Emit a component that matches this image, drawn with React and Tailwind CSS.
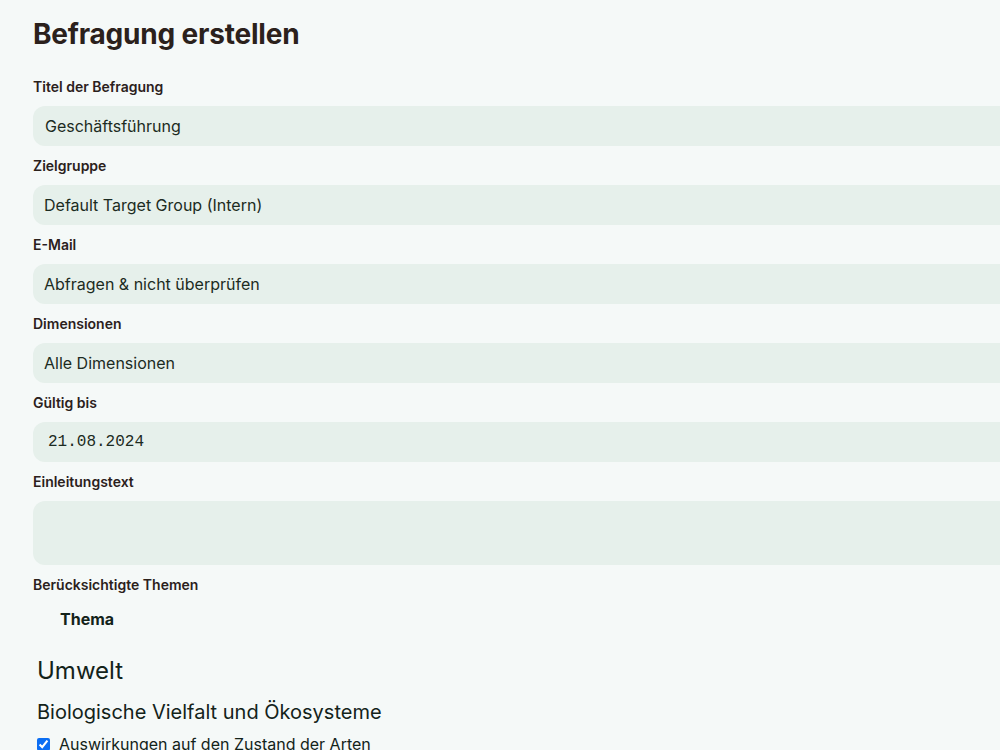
const fields = [
    { label: "Titel der Befragung", value: "Geschäftsführung", pad: "pl-3" },
    { label: "Zielgruppe", value: "Default Target Group (Intern)", pad: "pl-[11px]" },
    { label: "E-Mail", value: "Abfragen & nicht überprüfen", pad: "pl-[11px]" },
    { label: "Dimensionen", value: "Alle Dimensionen", pad: "pl-[11px]" },
];

function Label({ children }) {
    return <div className="text-sm leading-5 font-semibold text-[#2b211c] mb-[9px]">{children}</div>;
}

export default function App() {
    return (
        <div
            className="min-h-screen bg-[#f5f9f8] pl-[33px] pt-4 overflow-hidden"
            style={{ fontFamily: "Inter, 'Noto Sans', sans-serif" }}
        >
            <h1 className="text-[28px] leading-9 font-bold text-[#2b211c] tracking-[-0.2px]">Befragung erstellen</h1>

            <div className="mt-[25px] flex flex-col gap-[10px] mr-[-24px]">
                {fields.map((f) => (
                    <div key={f.label}>
                        <Label>{f.label}</Label>
                        <div className={`h-10 rounded-xl bg-[#e6f0eb] flex items-center text-base text-[#1c2b22] ${f.pad}`}>
                            {f.value}
                        </div>
                    </div>
                ))}
                <div>
                    <Label>Gültig bis</Label>
                    <div
                        className="h-10 rounded-xl bg-[#e6f0eb] flex items-center pl-[15px] text-base text-[#1c2b22]"
                        style={{ fontFamily: "'Liberation Mono', monospace" }}
                    >
                        21.08.2024
                    </div>
                </div>
                <div>
                    <Label>Einleitungstext</Label>
                    <div className="h-16 rounded-xl bg-[#e6f0eb]" />
                </div>
                <div>
                    <Label>Berücksichtigte Themen</Label>
                </div>
            </div>

            <div className="pl-[27px] pt-[3px] text-base leading-6 font-bold text-[#13231a]">Thema</div>

            <div className="pl-1 text-[#13231a]">
                <h2 className="mt-[24px] text-2xl leading-8">Umwelt</h2>
                <h3 className="mt-[11px] text-xl leading-7">Biologische Vielfalt und Ökosysteme</h3>
            </div>
            <label className="mt-[6px] flex items-center gap-[9px] text-base text-[#13231a]">
                <input type="checkbox" checked readOnly className="w-[13px] h-[13px] ml-1 accent-[#0b6ef3]" />
                Auswirkungen auf den Zustand der Arten
            </label>
        </div>
    );
}
